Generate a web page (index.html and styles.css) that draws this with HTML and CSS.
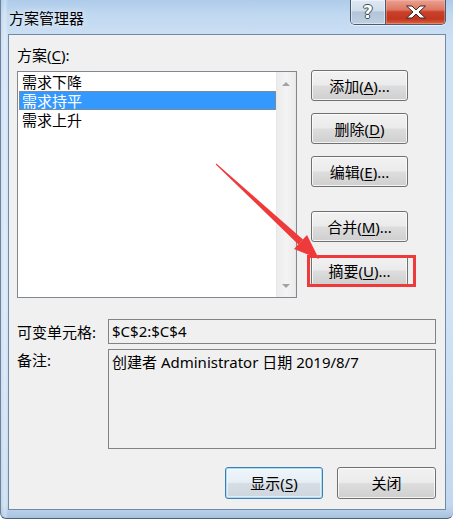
FILE: index.html
```html
<!DOCTYPE html>
<html lang="zh-CN">
<head>
<meta charset="utf-8">
<title>方案管理器</title>
<link rel="stylesheet" href="styles.css">
</head>
<body>
<div class="screen">
  <div class="window">
    <div class="titlebar">
      <div class="title">方案管理器</div>
      <div class="caption-buttons">
        <div class="cap help"><span class="qmark">?</span></div>
        <div class="cap close">
          <svg width="24" height="14" viewBox="0 0 24 14">
            <path d="M2.5 1 H8 L12 5 L16 1 H21.5 L15 7 L21.5 13 H16 L12 9 L8 13 H2.5 L9 7 Z" fill="#ffffff" stroke="#3a2520" stroke-width="1" stroke-linejoin="round"/>
          </svg>
        </div>
      </div>
    </div>
    <div class="client">
      <div class="top-label">方案(<u>C</u>):</div>
      <div class="main-row">
        <div class="listbox">
          <div class="items">
            <div class="item">需求下降</div>
            <div class="item selected">需求持平</div>
            <div class="item">需求上升</div>
          </div>
          <div class="scrollbar">
            <span class="arrow up"></span>
            <span class="arrow down"></span>
          </div>
        </div>
        <div class="side-buttons">
          <button class="btn b-add">添加(<u>A</u>)...</button>
          <button class="btn b-del">删除(<u>D</u>)</button>
          <button class="btn b-edit">编辑(<u>E</u>)...</button>
          <button class="btn b-merge">合并(<u>M</u>)...</button>
          <button class="btn b-summary">摘要(<u>U</u>)...</button>
        </div>
      </div>
      <div class="field-row">
        <div class="field-label">可变单元格:</div>
        <div class="field cells">$C$2:$C$4</div>
      </div>
      <div class="field-row notes-row">
        <div class="field-label">备注:</div>
        <div class="field notes">创建者 Administrator 日期 2019/8/7</div>
      </div>
      <div class="bottom-buttons">
        <button class="btn default b-show">显示(<u>S</u>)</button>
        <button class="btn b-close">关闭</button>
      </div>
    </div>
  </div>
  <svg class="annotation" width="453" height="519" viewBox="0 0 453 519">
    <polygon points="215.7,164.4 216.3,163.6 303,239.4 298.4,244.6" fill="#ef3a3b"/>
    <polygon points="319,259 294,249 307,235" fill="#ef3a3b"/>
    <rect x="308.5" y="256.5" width="106" height="29" fill="none" stroke="#ef3a3b" stroke-width="3"/>
  </svg>
</div>
</body>
</html>
```

FILE: styles.css
```css
html, body {
  margin: 0;
  padding: 0;
}
body {
  width: 453px;
  height: 519px;
  overflow: hidden;
  background: #ffffff;
  font-family: "Noto Sans", "Noto Sans CJK SC", sans-serif;
  font-size: 15px;
  color: #000000;
}
.screen {
  position: relative;
  width: 453px;
  height: 519px;
}
.window {
  box-sizing: border-box;
  width: 453px;
  height: 519px;
  display: flex;
  flex-direction: column;
  border-left: 1px solid #6f8299;
  border-bottom: 1px solid #4f6177;
  border-radius: 0 0 6px 6px;
  background:
    linear-gradient(90deg, rgba(255,255,255,0) 0, rgba(255,255,255,0.35) 4px, rgba(255,255,255,0) 7px),
    linear-gradient(180deg, #aecbea 0px, #c0d8f0 14px, #cde0f4 40px, #d1e3f5 300px, #c3d8ee 505px, #a8c3e0 518px);
}
.titlebar {
  height: 34px;
  flex: none;
  display: flex;
  justify-content: space-between;
  align-items: flex-start;
}
.title {
  padding: 8px 0 0 8px;
  line-height: 20px;
  font-size: 15px;
  color: #000;
  text-shadow: 0 0 6px rgba(255,255,255,0.9);
}
.caption-buttons {
  display: flex;
  margin-right: 7px;
  border: 1px solid #4a596c;
  border-top: none;
  border-radius: 0 0 5px 5px;
  overflow: hidden;
  box-shadow: 0 1px 0 rgba(255,255,255,0.6);
}
.cap {
  height: 24px;
  display: flex;
  align-items: center;
  justify-content: center;
}
.help {
  width: 34px;
  border-right: 1px solid #4a596c;
  background: linear-gradient(180deg, #dfe9f4 0%, #cfdcea 45%, #b3c4d8 50%, #bfd0e3 100%);
  box-shadow: inset 0 0 0 1px rgba(255,255,255,0.45);
}
.qmark {
  font-family: "DejaVu Sans", sans-serif;
  font-weight: bold;
  font-size: 17px;
  line-height: 20px;
  color: #ffffff;
  text-shadow: -1px 0 0 #3f4b59, 1px 0 0 #3f4b59, 0 -1px 0 #3f4b59, 0 1px 0 #3f4b59;
}
.close {
  width: 59px;
  background: linear-gradient(180deg, #eba193 0%, #dd7862 40%, #c9402a 50%, #c2361f 80%, #d96646 100%);
  box-shadow: inset 0 0 0 1px rgba(255,200,190,0.35);
}
.close svg {
  display: block;
}
.client {
  flex: none;
  box-sizing: border-box;
  height: 476px;
  margin: 0 7px;
  border: 1px solid #6f8aa8;
  background: #f0f0f0;
  padding: 10px 8px 10px 8px;
  display: flex;
  flex-direction: column;
}
.top-label {
  line-height: 20px;
  height: 20px;
}
u {
  text-decoration: underline;
  text-underline-offset: 2px;
}
.main-row {
  display: flex;
  margin-top: 6px;
}
.listbox {
  box-sizing: border-box;
  width: 280px;
  height: 227px;
  border: 1px solid #828790;
  background: #ffffff;
  display: flex;
}
.items {
  flex: 1;
  padding: 0 0 0 1px;
}
.item {
  box-sizing: border-box;
  height: 19px;
  line-height: 19px;
  padding-left: 2px;
  border: 1px solid transparent;
  white-space: nowrap;
}
.item.selected {
  background: #3399ff;
  color: #ffffff;
  border: 1px dotted #c0803a;
}
.scrollbar {
  width: 20px;
  display: flex;
  flex-direction: column;
  justify-content: space-between;
  align-items: center;
  padding: 10px 0 9px 0;
  background: linear-gradient(90deg, #e2e2e2 0, #ececec 1px, #f3f3f3 50%, #ececec 19px, #e2e2e2 20px);
}
.arrow {
  width: 0;
  height: 0;
  border-left: 4px solid transparent;
  border-right: 4px solid transparent;
}
.arrow.up {
  border-bottom: 4px solid #a2a2a2;
}
.arrow.down {
  border-top: 4px solid #a2a2a2;
}
.side-buttons {
  display: flex;
  flex-direction: column;
  margin-left: 14px;
  margin-top: -1px;
}
.btn {
  box-sizing: border-box;
  width: 97px;
  height: 31px;
  padding: 0;
  margin: 0;
  font-family: "Noto Sans", "Noto Sans CJK SC", sans-serif;
  font-size: 15px;
  line-height: 20px;
  color: #000000;
  border: 1px solid #707070;
  border-radius: 3px;
  background: linear-gradient(180deg, #f2f2f2 0%, #ebebeb 48%, #dddddd 52%, #cfcfcf 100%);
  box-shadow: inset 0 0 0 1px rgba(255,255,255,0.75);
}
.b-del { margin-top: 12px; }
.b-edit { margin-top: 12px; }
.b-merge { margin-top: 24px; }
.b-summary { margin-top: 13px; }
.field-row {
  display: flex;
  align-items: center;
  margin-top: 21px;
}
.field-label {
  width: 91px;
  flex: none;
  line-height: 20px;
}
.field {
  box-sizing: border-box;
  width: 328px;
  border: 1px solid #838383;
  background: #f0f0f0;
  padding: 0 3px;
  white-space: nowrap;
}
.cells {
  height: 25px;
  line-height: 23px;
}
.notes-row {
  margin-top: 5px;
  align-items: flex-start;
}
.notes-row .field-label {
  padding-top: 1px;
}
.notes {
  height: 100px;
  line-height: 20px;
  padding-top: 2px;
}
.bottom-buttons {
  display: flex;
  justify-content: flex-end;
  gap: 14px;
  margin-top: 18px;
  margin-right: 1px;
}
.bottom-buttons .btn {
  height: 32px;
}
.b-show {
  width: 98px;
}
.b-close {
  width: 99px;
}
.btn.default {
  border-color: #3c7fb1;
  box-shadow: inset 0 0 0 1px #a9dcf6, inset 0 0 0 2px rgba(255,255,255,0.5);
  background: linear-gradient(180deg, #eef5fa 0%, #e6eef5 48%, #d6dde5 52%, #cdd5dd 100%);
}
.annotation {
  position: absolute;
  left: 0;
  top: 0;
  pointer-events: none;
}
```
